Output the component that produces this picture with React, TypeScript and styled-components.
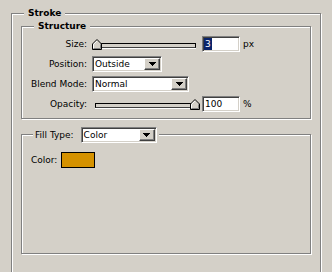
import styled, { createGlobalStyle } from "styled-components";

const GlobalStyle = createGlobalStyle`
  html, body {
    margin: 0;
    padding: 0;
    background: #d4d0c8;
  }
  body {
    font-family: "DejaVu Sans", "Liberation Sans", sans-serif;
    font-size: 9px;
    color: #000;
    overflow: hidden;
  }
`;

const Page = styled.div`
  width: 332px;
  height: 272px;
  padding: 13px 0 0 11px;
  box-sizing: border-box;
  overflow: hidden;
`;

// etched frame: grey line with a white line beside it
const Group = styled.section`
  box-sizing: border-box;
  border: 1px solid #808080;
  box-shadow: inset 1px 1px 0 #fff, 1px 1px 0 #fff;
`;

const OuterGroup = styled(Group)`
  width: 310px;
  height: 300px;
`;

const StructureGroup = styled(Group)`
  margin: 7px 9px 0;
  padding-bottom: 6px;
`;

const FillGroup = styled(Group)`
  margin: 15px 9px 0;
  height: 120px;
`;

const Legend = styled.div`
  display: flex;
  width: fit-content;
  margin: -6px 0 0 12px;
  padding: 0 4px;
  height: 11px;
  line-height: 11px;
  background: #d4d0c8;
  font-weight: bold;
`;

const FillLegend = styled.div`
  display: flex;
  align-items: center;
  gap: 7px;
  width: fit-content;
  margin: -8px 0 0 11px;
  padding: 0 2px;
  height: 16px;
  background: #d4d0c8;
`;

const Form = styled.div`
  display: grid;
  grid-template-columns: 65px auto;
  grid-auto-rows: 16px;
  column-gap: 5px;
  row-gap: 4px;
  margin-top: 4px;
  align-items: center;
`;

const Label = styled.span`
  justify-self: end;
  white-space: nowrap;
`;

const Controls = styled.div`
  display: flex;
  align-items: center;
  height: 16px;
`;

const Sunken = styled.div<{ $width: number }>`
  width: ${(p) => p.$width}px;
  height: 16px;
  box-sizing: border-box;
  display: flex;
  align-items: center;
  background: #fff;
  border: 1px solid;
  border-color: #808080 #fff #fff #808080;
  box-shadow: inset 1px 1px 0 #404040, inset -1px -1px 0 #d4d0c8;
  padding: 1px;
  flex-shrink: 0;
`;

const FieldText = styled.span<{ $selected?: boolean }>`
  height: 12px;
  line-height: 12px;
  padding: 0 1px;
  background: ${(p) => (p.$selected ? "#0a246a" : "transparent")};
  color: ${(p) => (p.$selected ? "#fff" : "#000")};
`;

const SelectText = styled.span`
  padding-left: 1px;
  line-height: 12px;
`;

const DropButton = styled.span`
  margin-left: auto;
  width: 16px;
  height: 12px;
  box-sizing: border-box;
  background: #d4d0c8;
  border: 1px solid;
  border-color: #fff #404040 #404040 #fff;
  box-shadow: inset -1px -1px 0 #808080;
  display: flex;
  align-items: center;
  justify-content: center;
`;

const Unit = styled.span`
  margin-left: 3px;
`;

const SliderBox = styled.div`
  position: relative;
  width: 108px;
  height: 16px;
  margin-right: 2px;
  flex-shrink: 0;
`;

const Track = styled.div`
  margin: 7px 4px 0 3px;
  height: 5px;
  box-sizing: border-box;
  border: 1px solid #000;
  border-bottom-color: #404040;
  background: #d4d0c8;
  box-shadow: 0 1px 0 #fff;
`;

const Thumb = styled.svg`
  position: absolute;
  top: 3px;
`;

const ColorRow = styled.div`
  display: flex;
  align-items: center;
  gap: 4px;
  margin: 9px 0 0 9px;
`;

const Swatch = styled.div<{ $color: string }>`
  width: 34px;
  height: 16px;
  box-sizing: border-box;
  border: 1px solid #000;
  background: ${(p) => p.$color};
`;

const Arrow = () => (
  <svg width="7" height="4" viewBox="0 0 7 4" shapeRendering="crispEdges">
    <path d="M0 0h7v1h-1v1h-1v1h-1v1h-1v-1h-1v-1h-1v-1h-1z" fill="#000" />
  </svg>
);

const Select = ({ value, width }: { value: string; width: number }) => (
  <Sunken $width={width}>
    <SelectText>{value}</SelectText>
    <DropButton>
      <Arrow />
    </DropButton>
  </Sunken>
);

const Slider = ({ value }: { value: number }) => (
  <SliderBox>
    <Track />
    <Thumb
      width="10"
      height="11"
      viewBox="0 0 10 11"
      style={{ left: `${Math.round(value * 98)}px` }}
    >
      <path d="M0.5 10.5V5L5 0.5L9.5 5V10.5Z" fill="#d4d0c8" stroke="#000" />
      <path d="M1.5 9.5V5.4L5 1.9" fill="none" stroke="#fff" />
      <path d="M1.5 9.5H8.5V5.4" fill="none" stroke="#808080" />
    </Thumb>
  </SliderBox>
);

const App = () => (
  <Page>
    <GlobalStyle />
    <OuterGroup>
      <Legend>Stroke</Legend>
      <StructureGroup>
        <Legend>Structure</Legend>
        <Form>
          <Label>Size:</Label>
          <Controls>
            <Slider value={0} />
            <Sunken $width={38}>
              <FieldText $selected>3</FieldText>
            </Sunken>
            <Unit>px</Unit>
          </Controls>
          <Label>Position:</Label>
          <Controls>
            <Select value="Outside" width={70} />
          </Controls>
          <Label>Blend Mode:</Label>
          <Controls>
            <Select value="Normal" width={97} />
          </Controls>
          <Label>Opacity:</Label>
          <Controls>
            <Slider value={1} />
            <Sunken $width={38}>
              <FieldText>100</FieldText>
            </Sunken>
            <Unit>%</Unit>
          </Controls>
        </Form>
      </StructureGroup>
      <FillGroup>
        <FillLegend>
          <span>Fill Type:</span>
          <Select value="Color" width={76} />
        </FillLegend>
        <ColorRow>
          <span>Color:</span>
          <Swatch $color="#d59200" />
        </ColorRow>
      </FillGroup>
    </OuterGroup>
  </Page>
);

export default App;
